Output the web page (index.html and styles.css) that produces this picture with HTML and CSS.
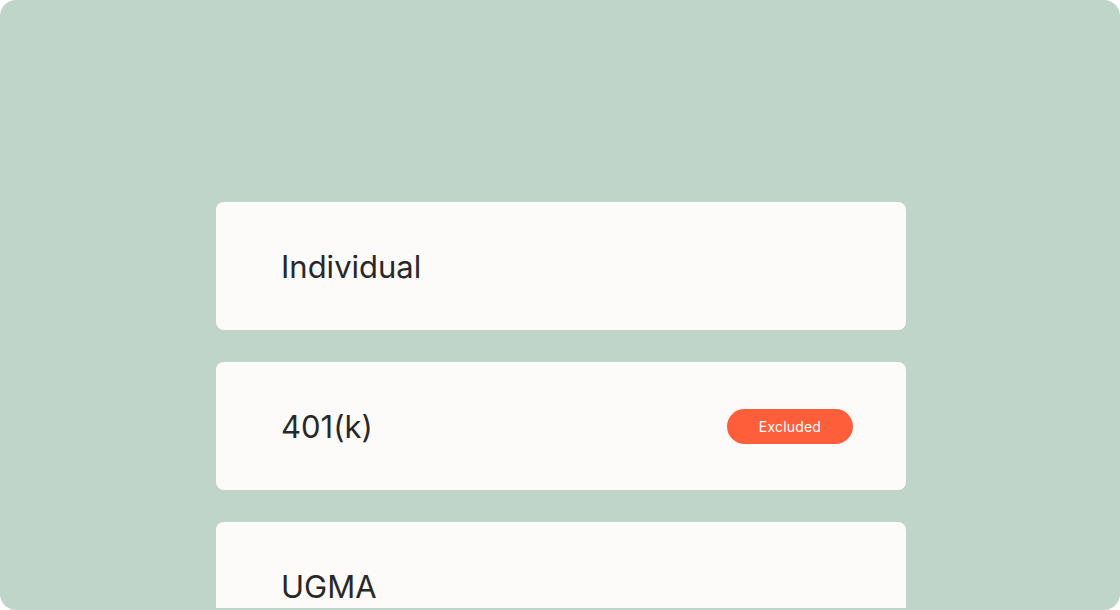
FILE: index.html
```html
<!DOCTYPE html>
<html lang="en">
<head>
    <meta charset="UTF-8">
    <meta name="viewport" content="width=device-width, initial-scale=1.0">
    <title>Accounts</title>
    <link rel="stylesheet" href="styles.css">
</head>
<body>
    <div class="frame">
        <div class="account-list">
            <div class="account-card">
                <span class="account-name">Individual</span>
            </div>
            <div class="account-card">
                <span class="account-name">401(k)</span>
                <span class="badge">Excluded</span>
            </div>
            <div class="account-card">
                <span class="account-name">UGMA</span>
            </div>
        </div>
    </div>
</body>
</html>
```

FILE: styles.css
```css
body {
    margin: 0;
    background-color: #ffffff;
    font-family: Inter, "Noto Sans", sans-serif;
}
.frame {
    width: 1120px;
    height: 610px;
    background-color: #c0d5c9;
    border-radius: 16px;
    overflow: hidden;
    padding: 202px 0 0 216px;
    box-sizing: border-box;
}
.account-list {
    width: 690px;
    height: 406px;
    display: flex;
    flex-direction: column;
    gap: 32px;
    overflow: hidden;
}
.account-card {
    flex-shrink: 0;
    height: 128px;
    background-color: #fcfbf9;
    border-radius: 8px;
    display: flex;
    align-items: center;
    justify-content: space-between;
    padding: 0 53px 0 65px;
}
.account-name {
    font-size: 31px;
    color: #282828;
}
.badge {
    width: 126px;
    height: 35px;
    border-radius: 18px;
    background-color: #ff5e3a;
    color: #ffffff;
    font-size: 14px;
    letter-spacing: 0.2px;
    display: flex;
    align-items: center;
    justify-content: center;
}
```
